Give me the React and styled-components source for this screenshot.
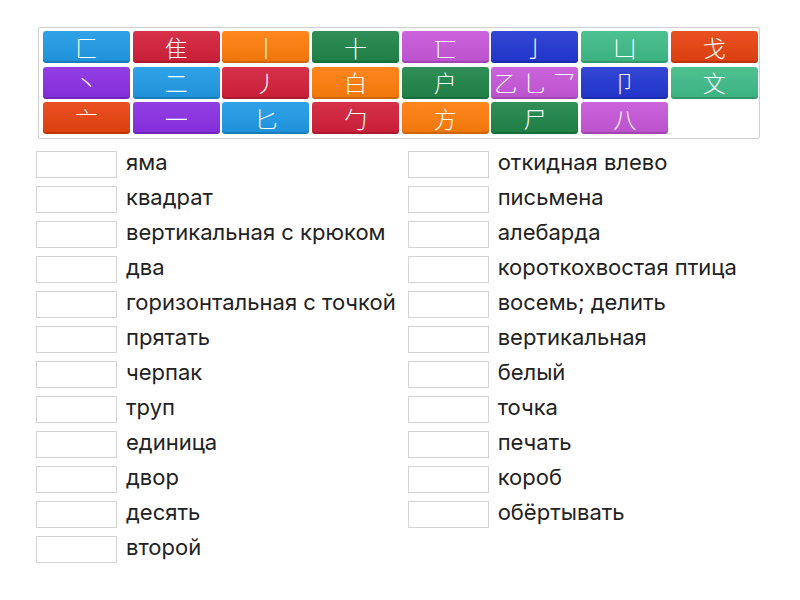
import React from 'react'
import styled, { createGlobalStyle } from 'styled-components'

const GlobalStyle = createGlobalStyle`
  body {
    margin: 0;
    background: #fff;
    font-family: Inter, "Noto Sans", sans-serif;
  }
`

const palette = {
  blue: '#1f9ae6',
  red: '#d3203a',
  orange: '#fe7d0b',
  green: '#1f8549',
  pink: '#c657d9',
  navy: '#2237d2',
  teal: '#3fbc88',
  flame: '#e8420f',
  violet: '#8a2fe4',
}

const tiles = [
  ['匚', 'blue'], ['隹', 'red'], ['丨', 'orange'], ['十', 'green'],
  ['匸', 'pink'], ['亅', 'navy'], ['凵', 'teal'], ['戈', 'flame'],
  ['丶', 'violet'], ['二', 'blue'], ['丿', 'red'], ['白', 'orange'],
  ['户', 'green'], ['乙 乚 乛', 'pink'], ['卩', 'navy'], ['文', 'teal'],
  ['亠', 'flame'], ['一', 'violet'], ['匕', 'blue'], ['勹', 'red'],
  ['方', 'orange'], ['尸', 'green'], ['八', 'pink'],
]

const leftWords = [
  'яма', 'квадрат', 'вертикальная с крюком', 'два',
  'горизонтальная с точкой', 'прятать', 'черпак', 'труп',
  'единица', 'двор', 'десять', 'второй',
]

const rightWords = [
  'откидная влево', 'письмена', 'алебарда', 'короткохвостая птица',
  'восемь; делить', 'вертикальная', 'белый', 'точка',
  'печать', 'короб', 'обёртывать',
]

function App() {
  return (
    <Page>
      <GlobalStyle />
      <Bank>
        {tiles.map(([glyph, color], i) => (
          <Tile key={i} $color={palette[color]}>{glyph}</Tile>
        ))}
      </Bank>
      <Columns>
        <Column>
          {leftWords.map((w) => (
            <Row key={w}>
              <Slot />
              <Label>{w}</Label>
            </Row>
          ))}
        </Column>
        <Column>
          {rightWords.map((w) => (
            <Row key={w}>
              <Slot />
              <Label>{w}</Label>
            </Row>
          ))}
        </Column>
      </Columns>
    </Page>
  )
}

export default App

const Page = styled.div`
  width: 800px;
  height: 600px;
  padding: 27px 0 0 36px;
  box-sizing: border-box;
`

const Bank = styled.div`
  margin-left: 2px;
  width: 722px;
  height: 112px;
  box-sizing: border-box;
  border: 1px solid #cfcfcf;
  border-radius: 2px;
  padding: 3px 2px 4px 4px;
  display: grid;
  grid-template-columns: repeat(8, 87px);
  grid-auto-rows: 32px;
  column-gap: 2.7px;
  row-gap: 3.5px;
`

const Tile = styled.div`
  background: linear-gradient(to bottom, rgba(255,255,255,0.08), rgba(0,0,0,0.06)), ${(p) => p.$color};
  border-radius: 3px;
  box-shadow: inset 0 -2px 0 rgba(0,0,0,0.14);
  color: #fff;
  display: flex;
  align-items: center;
  justify-content: center;
  font-family: "Noto Sans CJK SC", "Noto Sans CJK TC", sans-serif;
  font-size: 23px;
  font-weight: 300;
  white-space: pre;
  word-spacing: 1px;
  line-height: 1;
  overflow: hidden;
`

const Columns = styled.div`
  display: flex;
  gap: 12px;
  margin-top: 12px;
`

const Column = styled.div`
  display: flex;
  flex-direction: column;
  gap: 8px;
`

const Row = styled.div`
  display: flex;
  align-items: center;
  gap: 9px;
  height: 27px;
`

const Slot = styled.div`
  width: 81px;
  height: 27px;
  box-sizing: border-box;
  border: 1px solid #d4d4d4;
  flex-shrink: 0;
`

const Label = styled.span`
  font-size: 22px;
  color: #222;
  white-space: nowrap;
  padding-bottom: 5px;
`
